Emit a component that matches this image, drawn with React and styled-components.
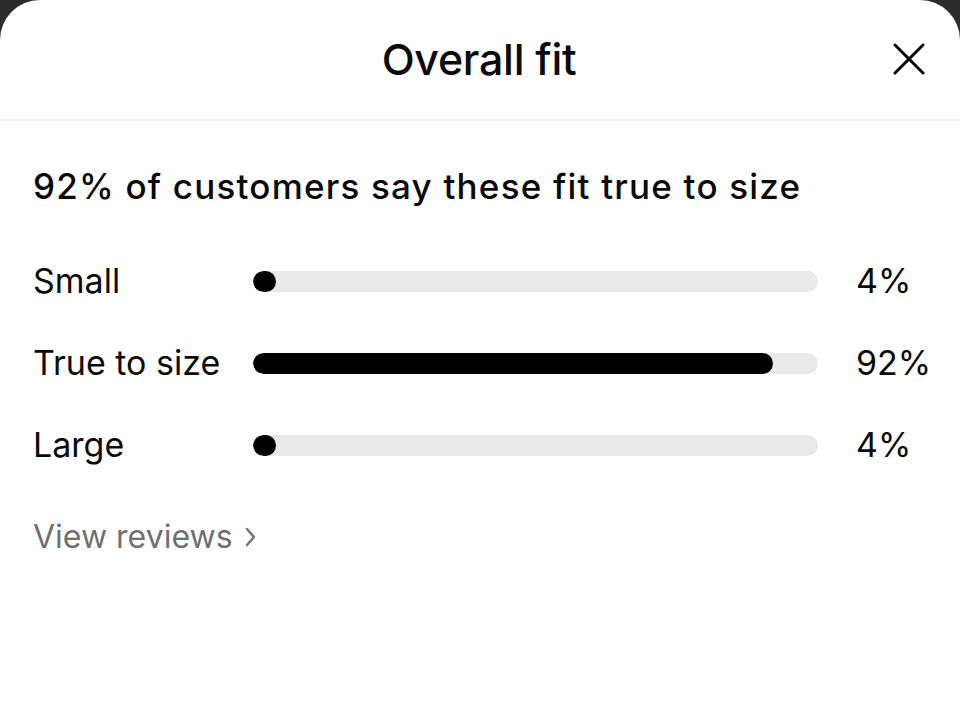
import React from "react";
import styled, { createGlobalStyle } from "styled-components";

const Global = createGlobalStyle`
  html, body { margin: 0; padding: 0; background: #2c2c2c; }
  body { font-family: Inter, "Noto Sans", "Liberation Sans", sans-serif; -webkit-font-smoothing: antialiased; }
  * { box-sizing: border-box; }
`;

const Sheet = styled.div`
  background: #ffffff;
  min-height: 100vh;
  border-radius: 40px 40px 0 0;
  color: #0a0a0a;
`;

const Header = styled.header`
  height: 121px;
  display: grid;
  grid-template-columns: 1fr auto 1fr;
  align-items: center;
  border-bottom: 2px solid #efefef;
  padding: 0 35px 2px 33px;
`;

const Title = styled.h1`
  grid-column: 2;
  margin: 0;
  font-size: 43px;
  font-weight: 500;
  letter-spacing: -0.3px;
  line-height: 50px;
`;

const CloseButton = styled.button`
  grid-column: 3;
  justify-self: end;
  width: 32px;
  height: 32px;
  padding: 0;
  border: none;
  background: none;
  display: flex;
  cursor: pointer;
`;

const Body = styled.main`
  padding: 45px 33px 0;
`;

const Heading = styled.h2`
  margin: 0;
  font-size: 35px;
  line-height: 40px;
  font-weight: 500;
  letter-spacing: 1.2px;
`;

const Rows = styled.div`
  margin-top: 34px;
  display: flex;
  flex-direction: column;
`;

const Row = styled.div`
  height: 82px;
  display: grid;
  grid-template-columns: 220px 565px 1fr;
  align-items: center;
`;

const Label = styled.span`
  font-size: 34px;
  line-height: 40px;
  font-weight: 400;
`;

const Track = styled.div`
  height: 21px;
  border-radius: 11px;
  background: #e9e9e9;
  overflow: hidden;
`;

const Fill = styled.div`
  height: 100%;
  border-radius: 11px;
  background: #000;
`;

const Percent = styled.span`
  font-size: 34px;
  line-height: 40px;
  font-weight: 400;
  padding-left: 38px;
`;

const ViewLink = styled.a`
  margin-top: 31px;
  display: inline-flex;
  align-items: center;
  gap: 12px;
  font-size: 32px;
  line-height: 40px;
  color: #707070;
  text-decoration: none;
  cursor: pointer;
`;

const data = [
  { label: "Small", value: 4 },
  { label: "True to size", value: 92 },
  { label: "Large", value: 4 },
];

export default function App() {
  return (
    <>
      <Global />
      <Sheet>
        <Header>
          <Title>Overall fit</Title>
          <CloseButton aria-label="Close">
            <svg width="32" height="32" viewBox="0 0 32 32">
              <path d="M2 2 L30 30 M30 2 L2 30" stroke="#000" strokeWidth="3" strokeLinecap="round" fill="none" />
            </svg>
          </CloseButton>
        </Header>
        <Body>
          <Heading>92% of customers say these fit true to size</Heading>
          <Rows>
            {data.map((d) => (
              <Row key={d.label}>
                <Label>{d.label}</Label>
                <Track>
                  <Fill style={{ width: `${d.value}%` }} />
                </Track>
                <Percent>{d.value}%</Percent>
              </Row>
            ))}
          </Rows>
          <ViewLink>
            View reviews
            <svg width="11" height="20" viewBox="0 0 11 20">
              <path d="M2 2 L9 10 L2 18" stroke="#707070" strokeWidth="2.4" strokeLinecap="round" strokeLinejoin="round" fill="none" />
            </svg>
          </ViewLink>
        </Body>
      </Sheet>
    </>
  );
}
